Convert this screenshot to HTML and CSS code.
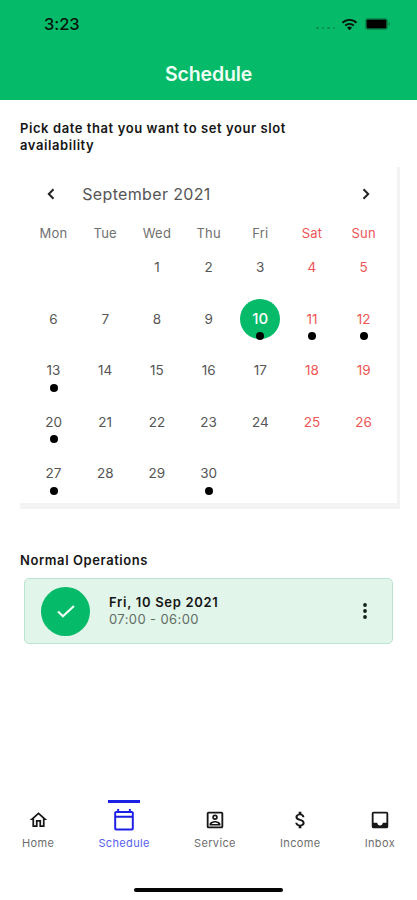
FILE: index.html
```html
<!DOCTYPE html>
<html lang="en">
<head>
<meta charset="utf-8">
<title>Schedule</title>
<link rel="stylesheet" href="styles.css">
</head>
<body>
<header class="header">
  <div class="status">
    <span class="time">3:23</span>
    <div class="signals">
      <span class="cell"><i></i><i></i><i></i><i></i></span>
      <svg class="wifi" width="17" height="13" viewBox="0 0 18 14"><g fill="none" stroke="currentColor" stroke-width="2"><path d="M1.4 5.1a10.8 10.8 0 0 1 15.2 0"/><path d="M4.3 8.2a6.7 6.7 0 0 1 9.4 0"/></g><path fill="currentColor" d="M9 13.2 6.3 10.4a3.9 3.9 0 0 1 5.4 0z"/></svg>
      <svg class="battery" width="26" height="12" viewBox="0 0 26 12"><rect x=".5" y=".5" width="22" height="11" rx="2" fill="none" stroke="#078a4b"/><rect x="1.500" y="1.500" width="20" height="9" rx=".8" fill="#000"/><path d="M23.500 3.800c2.200.8 2.200 3.600 0 4.400z" fill="#078a4b"/></svg>
    </div>
  </div>
  <h1 class="title">Schedule</h1>
</header>
<main class="main">
  <h2 class="prompt">Pick date that you want to set your slot availability</h2>
  <section class="calendar">
    <div class="month">
      <svg width="20" height="20" viewBox="0 0 20 20"><path d="M12.5 5.2 7.8 10l4.7 4.8"/></svg>
      <span class="month-name">September 2021</span>
      <svg width="20" height="20" viewBox="0 0 20 20"><path d="M7.5 5.2 12.2 10l-4.7 4.8"/></svg>
    </div>
    <div class="week names"><span>Mon</span><span>Tue</span><span>Wed</span><span>Thu</span><span>Fri</span><span>Sat</span><span>Sun</span></div>
    <div class="week"><span></span><span></span><span>1</span><span>2</span><span>3</span><span>4</span><span>5</span></div>
    <div class="week"><span>6</span><span>7</span><span>8</span><span>9</span><span class="selected dot">10</span><span class="dot">11</span><span class="dot">12</span></div>
    <div class="week"><span class="dot">13</span><span>14</span><span>15</span><span>16</span><span>17</span><span>18</span><span>19</span></div>
    <div class="week"><span class="dot">20</span><span>21</span><span>22</span><span>23</span><span>24</span><span>25</span><span>26</span></div>
    <div class="week"><span class="dot">27</span><span>28</span><span>29</span><span class="dot">30</span><span></span><span></span><span></span></div>
  </section>
  <h2 class="subhead">Normal Operations</h2>
  <article class="slot">
    <div class="check"><svg width="22" height="22" viewBox="0 0 24 24"><path d="m3.300 12.600 5.300 5.200L20.700 6.500"/></svg></div>
    <div class="when"><strong>Fri, 10 Sep 2021</strong><span>07:00 - 06:00</span></div>
    <svg class="more" width="6" height="18" viewBox="0 0 6 18"><circle cx="3" cy="3" r="1.900"/><circle cx="3" cy="9" r="1.900"/><circle cx="3" cy="15" r="1.900"/></svg>
  </article>
</main>
<nav class="nav">
  <a class="tab home"><svg width="21" height="22" viewBox="0 0 24 24"><path d="M12 5.69l5 4.5V18h-2v-6H9v6H7v-7.81l5-4.5M12 3 2 12h3v8h6v-6h2v6h6v-8h3z"/></svg><span>Home</span></a>
  <a class="tab schedule active"><svg width="24" height="24" viewBox="0 0 24 24"><path d="M20 3h-1V1h-2v2H7V1H5v2H4c-1.1 0-2 .9-2 2v16c0 1.1.9 2 2 2h16c1.1 0 2-.9 2-2V5c0-1.1-.9-2-2-2zm0 18H4V10h16v11zm0-13H4V5h16v3z"/></svg><span>Schedule</span></a>
  <a class="tab service"><svg width="24" height="24" viewBox="0 0 24 24"><path d="M19 3H5a2 2 0 0 0-2 2v14a2 2 0 0 0 2 2h14a2 2 0 0 0 2-2V5a2 2 0 0 0-2-2zm0 16H5V5h14v14zM12 12a3 3 0 1 0 0-6 3 3 0 0 0 0 6zm0-4.200a1.200 1.200 0 1 1 0 2.400 1.200 1.200 0 0 1 0-2.400zM18 16.600c0-2.500-4-3.600-6-3.600s-6 1.100-6 3.600V18h12v-1.400zM8.300 16.300c.7-.8 2.400-1.500 3.700-1.500s3 .7 3.700 1.500H8.300z"/></svg><span>Service</span></a>
  <a class="tab income"><svg width="23" height="23" viewBox="0 0 24 24"><path d="M11.800 10.900c-2.270-.59-3-1.200-3-2.150 0-1.090 1.010-1.850 2.700-1.850 1.780 0 2.440.85 2.500 2.100h2.210c-.07-1.720-1.120-3.300-3.210-3.810V3h-3v2.160c-1.940.42-3.500 1.680-3.500 3.610 0 2.310 1.910 3.460 4.700 4.130 2.500.6 3 1.480 3 2.410 0 .69-.49 1.790-2.700 1.790-2.060 0-2.870-.92-2.980-2.100h-2.200c.12 2.190 1.760 3.420 3.680 3.830V21h3v-2.150c1.950-.37 3.500-1.500 3.500-3.550 0-2.840-2.430-3.810-4.700-4.400z"/></svg><span>Income</span></a>
  <a class="tab inbox"><svg width="24" height="24" viewBox="0 0 24 24"><path d="M19 3H5a2 2 0 0 0-2 2v14a2 2 0 0 0 2 2h14a2 2 0 0 0 2-2V5a2 2 0 0 0-2-2zm0 12h-4c0 1.660-1.340 3-3 3s-3-1.340-3-3H5V5h14v10z"/></svg><span>Inbox</span></a>
</nav>
<footer class="footer"><div class="home-indicator"></div></footer>
</body>
</html>
```
FILE: styles.css
```css
* { box-sizing: border-box; }
body {
  margin: 0;
  width: 417px;
  height: 900px;
  display: flex;
  flex-direction: column;
  background: #fff;
  color: #161616;
  font-family: Inter, sans-serif;
  overflow: hidden;
}
h1, h2 { margin: 0; }
.header { height: 100px; background: #05ba68; display: flex; flex-direction: column; }
.status { height: 48px; padding: 0 26px 0 44px; display: flex; align-items: center; justify-content: space-between; color: #06150c; }
.time { font-size: 16.500px; font-weight: 500; letter-spacing: -.1px; }
.signals { display: flex; align-items: center; }
.cell { display: flex; gap: 3px; margin: 8px 6px 0 0; }
.cell i { width: 2.500px; height: 2.500px; border-radius: 50%; background: #078c4e; }
.wifi { margin-right: 7px; }
.title { height: 52px; line-height: 52px; text-align: center; color: #effff5; font-size: 19.500px; font-weight: 600; letter-spacing: -.15px; }
.main { padding: 20px 17px 0 20px; }
.prompt, .subhead { font-size: 13px; line-height: 17px; font-weight: 600; letter-spacing: .58px; }
.prompt { width: 290px; }
.calendar { margin-top: 13px; height: 342px; padding: 10px 7px 0 7.700px; border-right: 3px solid #f3f3f3; border-bottom: 6px solid #f3f3f3; }
.month { height: 34px; padding: 0 14px 0 13px; display: flex; align-items: center; }
.month svg { fill: none; stroke: #222; stroke-width: 2; }
.month-name { flex: 1; padding-left: 21.500px; font-size: 16px; color: #555; letter-spacing: .35px; }
.week { height: 51.600px; display: grid; grid-template-columns: repeat(7, 51.700px); color: #555; font-size: 13.500px; }
.week span { display: flex; align-items: center; justify-content: center; position: relative; }
.week span:nth-child(n+6) { color: #ed5555; }
.names { height: 31px; padding-top: 12px; margin-bottom: -.700px; font-size: 13px; letter-spacing: .2px; color: #707070; }
.week .selected { width: 40px; height: 40px; margin: 5.800px; border-radius: 50%; background: #05ba68; color: #fff; font-size: 15px; font-weight: 500; }
.dot::after { content: ""; position: absolute; left: calc(50% - 4px); top: calc(50% + 13.500px); width: 8px; height: 8px; border-radius: 50%; background: #000; }
.subhead { margin-top: 43px; }
.slot { margin: 9px 7px 0 4px; height: 66px; padding: 0 24px 0 16px; display: flex; align-items: center; border: 1px solid #b9e4cf; border-radius: 5px; background: #e2f5ea; }
.check { width: 49px; height: 49px; border-radius: 50%; background: #05ba68; display: flex; align-items: center; justify-content: center; }
.check svg { fill: none; stroke: #f2fff7; stroke-width: 2.400; }
.when { flex: 1; padding-left: 19px; display: flex; flex-direction: column; font-size: 13px; line-height: 17px; }
.when strong { font-weight: 600; letter-spacing: .7px; }
.when span { color: #5f6d65; letter-spacing: .4px; }
.more { fill: #15201a; }
.nav { margin-top: auto; height: 58px; padding: 0 22px; display: flex; justify-content: space-between; }
.tab { position: relative; display: flex; flex-direction: column; align-items: center; fill: #171717; color: #6d6d6d; font-size: 11px; line-height: 15px; letter-spacing: .35px; }
.tab svg { height: 22px; margin: 9px 0 5px; }
.tab.active { color: #5960ee; fill: #1c20e5; }
.tab.active svg { height: 23.500px; margin: 8px 0 4.500px; }
.active::before { content: ""; position: absolute; top: 0; left: calc(50% - 16px); width: 32px; height: 2.500px; background: #1c20e5; }
.footer { height: 42px; display: flex; justify-content: center; align-items: flex-start; padding-top: 30px; }
.home-indicator { width: 149px; height: 4px; border-radius: 2px; background: #050505; }
```
